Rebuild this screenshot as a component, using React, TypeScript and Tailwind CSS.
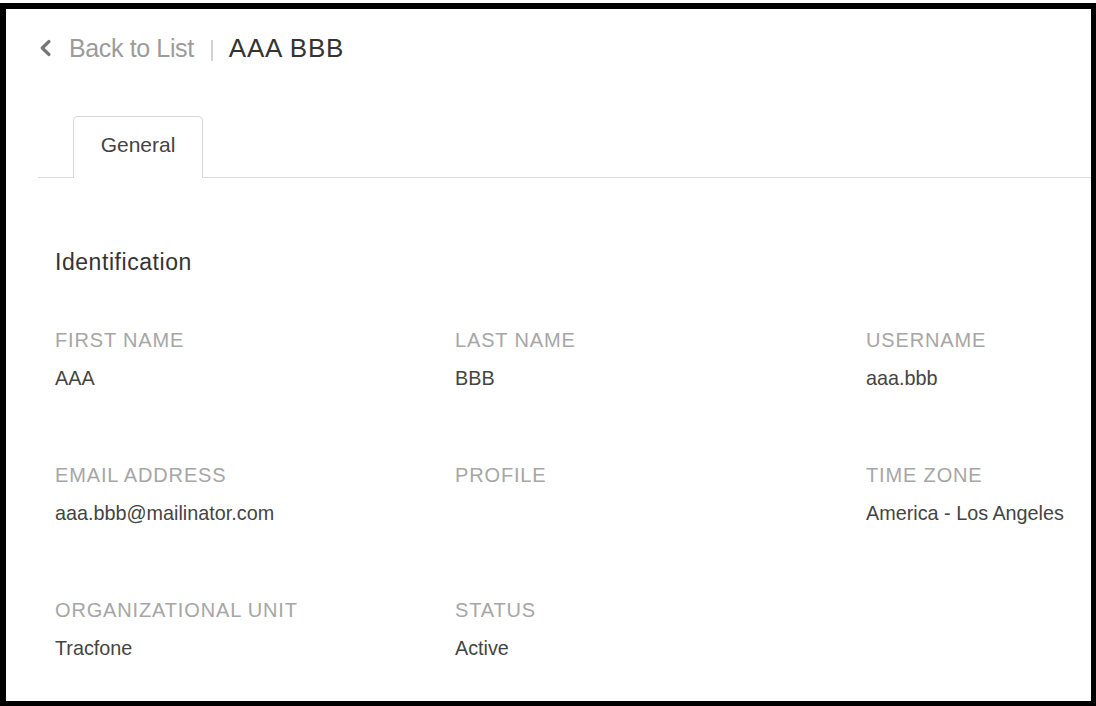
import React from "react";

interface Field {
  label: string;
  value: string;
}

const rows: Field[][] = [
  [
    { label: "FIRST NAME", value: "AAA" },
    { label: "LAST NAME", value: "BBB" },
    { label: "USERNAME", value: "aaa.bbb" },
  ],
  [
    { label: "EMAIL ADDRESS", value: "aaa.bbb@mailinator.com" },
    { label: "PROFILE", value: "" },
    { label: "TIME ZONE", value: "America - Los Angeles" },
  ],
  [
    { label: "ORGANIZATIONAL UNIT", value: "Tracfone" },
    { label: "STATUS", value: "Active" },
  ],
];

function FieldView({ field }: { field: Field }) {
  return (
    <div className="flex flex-col">
      <div className="h-[24px] text-[20px] leading-[24px] tracking-[0.85px] text-[#a6a6a6]">
        {field.label}
      </div>
      <div className="mt-[14px] h-[24px] text-[19.8px] leading-[24px] text-[#444444]">
        {field.value}
      </div>
    </div>
  );
}

export default function App() {
  return (
    <div className="h-[706px] w-[1096px] bg-white pt-[3px] font-['Liberation_Sans',Arial,sans-serif]">
      <div className="h-[703px] border-t-[6px] border-l-[6px] border-r-[5px] border-b-[5px] border-black bg-white">
        <div className="mt-[24px] flex h-[30px] items-center pl-[33px]">
          <svg width="13" height="18" viewBox="0 0 13 18" className="mr-[17px]">
            <polyline
              points="10,2.5 3.2,9 10,15.5"
              fill="none"
              stroke="#777777"
              strokeWidth="3.2"
              strokeLinecap="round"
              strokeLinejoin="round"
            />
          </svg>
          <span className="text-[25px] leading-[30px] tracking-[-0.37px] text-[#9b9b9b]">
            Back to List
          </span>
          <span className="ml-[17px] mr-[16px] h-[21px] w-[2px] translate-y-[2px] bg-[#d2d2d2]" />
          <span className="text-[26px] leading-[30px] tracking-[0.8px] text-[#333333]">
            AAA BBB
          </span>
        </div>

        <div className="ml-[32px] mt-[53px] flex items-end border-b border-[#dcdcdc] pl-[35px]">
          <div className="-mb-px h-[62px] w-[130px] rounded-t-[5px] border border-b-0 border-[#d6d6d6] bg-white pt-[16px] text-center text-[21px] leading-[24px] text-[#444444]">
            General
          </div>
        </div>

        <div className="mt-[70px] pl-[49px]">
          <h2 className="h-[28px] text-[23px] leading-[28px] tracking-[0.55px] text-[#333333]">
            Identification
          </h2>
          <div className="mt-[52px] flex flex-col gap-y-[73px]">
            {rows.map((row, i) => (
              <div key={i} className="grid grid-cols-[400px_411px_1fr]">
                {row.map((f) => (
                  <FieldView key={f.label} field={f} />
                ))}
              </div>
            ))}
          </div>
        </div>
      </div>
    </div>
  );
}
